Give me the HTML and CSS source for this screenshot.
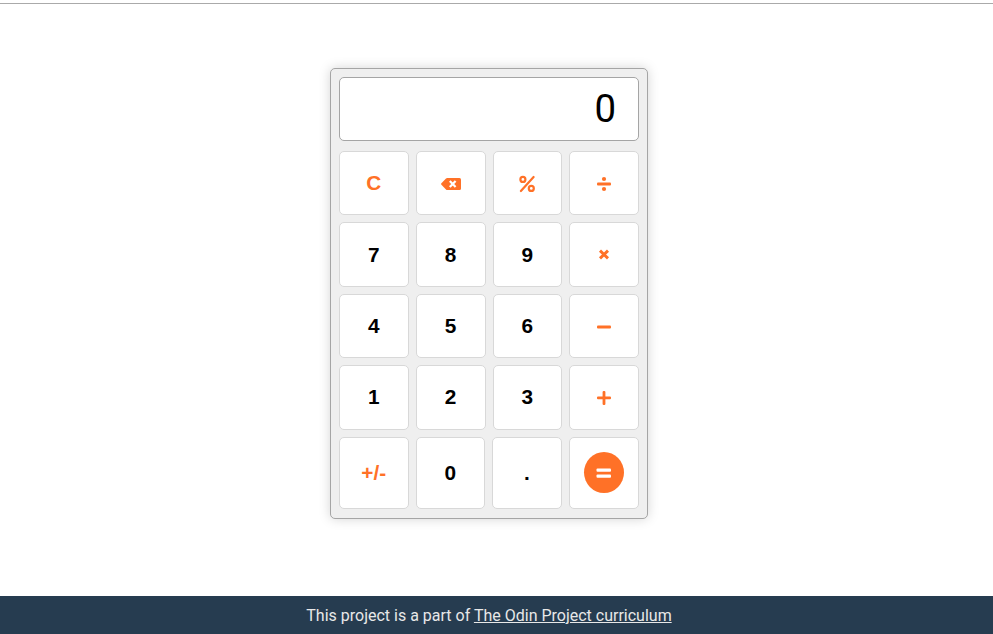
FILE: index.html
```html
<!DOCTYPE html>
<html lang="en">
<head>
<meta charset="utf-8">
<title>Calculator</title>
<link rel="stylesheet" href="styles.css">
</head>
<body>
<header class="header"></header>
<main class="main">
  <div class="calculator">
    <div class="display">0</div>
    <div class="row">
      <button class="key accent">C</button>
      <button class="key accent"><svg width="20" height="20" viewBox="0 0 20 20"><path fill="currentColor" d="M6.200 5H18.500Q20 5 20 6.500V15.500Q20 17 18.500 17H6.200Q5.500 17 5 16.500L.4 11.700Q-.2 11 .4 10.300L5 5.500Q5.500 5 6.200 5Z"/><path d="M8.800 8L14.600 14M14.600 8L8.800 14" stroke="#fff" stroke-width="2.200"/></svg></button>
      <button class="key accent"><svg width="20" height="20" viewBox="0 0 20 20" fill="none" stroke="currentColor" stroke-width="2.200" stroke-linecap="round"><path d="M3.900 18L16.600 4"/><circle cx="5.900" cy="6.400" r="2.500"/><circle cx="14.300" cy="15.400" r="2.500"/></svg></button>
      <button class="key accent"><svg width="20" height="20" viewBox="0 0 20 20" fill="currentColor"><rect x="3" y="9.500" width="14" height="3" rx="1"/><circle cx="10" cy="6" r="2.100"/><circle cx="10" cy="16" r="2.100"/></svg></button>
    </div>
    <div class="row">
      <button class="key">7</button><button class="key">8</button><button class="key">9</button>
      <button class="key accent"><svg width="20" height="20" viewBox="0 0 20 20"><path d="M6 5.600L14 13.400M14 5.600L6 13.400" stroke="currentColor" stroke-width="2.900"/></svg></button>
    </div>
    <div class="row">
      <button class="key">4</button><button class="key">5</button><button class="key">6</button>
      <button class="key accent"><svg width="20" height="20" viewBox="0 0 20 20"><rect x="3" y="9.500" width="14" height="3" rx="1" fill="currentColor"/></svg></button>
    </div>
    <div class="row">
      <button class="key">1</button><button class="key">2</button><button class="key">3</button>
      <button class="key accent"><svg width="20" height="20" viewBox="0 0 20 20" fill="currentColor"><rect x="3" y="9.500" width="14" height="2.800" rx="1"/><rect x="8.600" y="4" width="2.800" height="14" rx="1"/></svg></button>
    </div>
    <div class="row row-last">
      <button class="key accent">+/-</button><button class="key">0</button><button class="key">.</button>
      <button class="key"><span class="equals"><svg width="20" height="20" viewBox="0 0 20 20" fill="currentColor"><rect x="2.500" y="5.500" width="14.500" height="3.200" rx="1"/><rect x="2.500" y="11.500" width="14.500" height="3.200" rx="1"/></svg></span></button>
    </div>
  </div>
</main>
<footer class="footer"><p>This project is a part of <a href="#">The Odin Project curriculum</a></p></footer>
</body>
</html>
```
FILE: styles.css
```css
* { box-sizing: border-box; }
body {
  margin: 0;
  height: 634px;
  display: flex;
  flex-direction: column;
  overflow: hidden;
  background: #fff;
  font-family: Roboto, sans-serif;
}
.header { height: 4px; border-bottom: 1px solid #aaa; }
.main {
  flex: 1;
  display: flex;
  justify-content: center;
  align-items: flex-start;
  padding: 64px 15px 0 0;
}
.calculator {
  width: 318px;
  height: 451px;
  padding: 8px;
  display: flex;
  flex-direction: column;
  gap: 7px;
  background: #efefef;
  border: 1px solid #a5a5a5;
  border-radius: 5px;
  box-shadow: 0 0 12px rgba(0, 0, 0, .17);
}
.display {
  height: 64px;
  margin-bottom: 3px;
  padding: 0 22px 1px;
  display: flex;
  align-items: center;
  justify-content: flex-end;
  background: #fff;
  border: 1px solid #a5a5a5;
  border-radius: 5px;
  font-size: 38.4px;
  color: #000;
}
.row {
  height: 64.4px;
  display: grid;
  grid-template-columns: repeat(4, 1fr);
  gap: 7px;
}
.row-last { height: 72px; grid-template-columns: 69.6px 69.6px 69.6px 1fr; }
.key {
  display: flex;
  align-items: center;
  justify-content: center;
  padding: 0;
  background: #fff;
  border: 1px solid #d8d8d8;
  border-radius: 5px;
  font: bold 20.8px "Liberation Sans", Arial, sans-serif;
  color: #000;
}
.accent { color: #ff7127; }
.key svg { display: block; }
.equals {
  width: 40px;
  height: 41px;
  display: flex;
  align-items: center;
  justify-content: center;
  border-radius: 50%;
  background: #ff7127;
  color: #fff;
}
.footer {
  height: 38px;
  padding-right: 15px;
  display: flex;
  align-items: center;
  justify-content: center;
  background: #263c50;
  color: #e8e8e8;
  font-size: 16px;
}
.footer p { margin: 0; }
.footer a { color: inherit; }
```
